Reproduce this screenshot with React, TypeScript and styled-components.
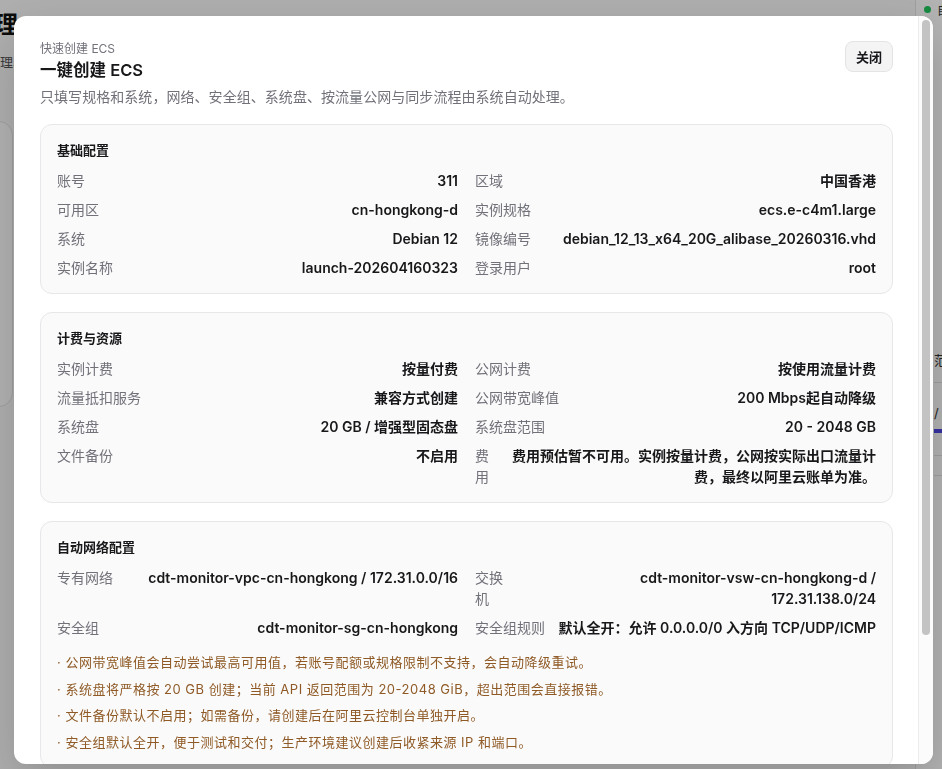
import React from "react";
import styled, { createGlobalStyle } from "styled-components";

const GlobalStyle = createGlobalStyle`
  html, body {
    margin: 0;
    padding: 0;
    height: 100%;
    overflow: hidden;
  }
  body {
    font-family: Inter, "Noto Sans CJK SC", "Noto Sans", sans-serif;
    color: #18181b;
    -webkit-font-smoothing: antialiased;
  }
  * { box-sizing: border-box; }
`;

/* ---------- background page ---------- */

const Page = styled.div`
  display: grid;
  grid-template-columns: 915px 1fr;
  width: 100vw;
  height: 100vh;
  background: #fafafa;
  overflow: hidden;
`;

const Main = styled.main`
  overflow: hidden;
  padding-top: 12px;
`;

const MainInner = styled.div`
  margin-left: -78px;
  width: 900px;
`;

const PageTitle = styled.h1`
  margin: 0;
  font-size: 24px;
  line-height: 26px;
  font-weight: 700;
  color: #111;
`;

const PageSub = styled.p`
  margin: 15px 0 0;
  font-size: 13px;
  line-height: 18px;
  color: #555;
`;

const PageCard = styled.section`
  margin-top: 50px;
  width: 91px;
  height: 286px;
  background: #fff;
  border: 1px solid #e4e4e7;
  border-radius: 14px;
`;

const Side = styled.aside`
  border-left: 1px solid #e4e4e7;
  background: #fff;
  padding-left: 8px;
  overflow: hidden;
  white-space: nowrap;
`;

const Status = styled.div`
  display: flex;
  align-items: center;
  gap: 6px;
  height: 18px;
  font-size: 12px;
  color: #333;
`;

const Dot = styled.span`
  flex: none;
  width: 7px;
  height: 7px;
  border-radius: 50%;
  background: #22c55e;
`;

const SideList = styled.div`
  margin-top: 332px;
  margin-left: 10px;
  font-size: 13px;
  color: #333;
`;

const SideItem = styled.div`
  padding: 0 0 12px;
  border-bottom: 1px solid #e4e4e7;
  line-height: 20px;
`;

const SideProgress = styled.div`
  padding-top: 20px;
  border-bottom: 1px solid #e4e4e7;
  padding-bottom: 22px;
  line-height: 20px;
`;

const Bar = styled.div`
  margin-top: 6px;
  height: 4px;
  background: #4f46e5;
`;

const SideEmpty = styled.div`
  height: 20px;
  border-bottom: 1px solid #e4e4e7;
`;

/* ---------- modal ---------- */

const Overlay = styled.div`
  position: fixed;
  inset: 0;
  background: rgba(0, 0, 0, 0.3);
  display: flex;
  justify-content: flex-start;
  align-items: flex-start;
  padding: 16px 0 0 14px;
`;

const Dialog = styled.div`
  display: flex;
  width: 919px;
  height: 748px;
  background: #fff;
  border-radius: 12px;
  box-shadow: 0 18px 48px rgba(0, 0, 0, 0.18);
  overflow: hidden;
`;

const ScrollArea = styled.div`
  flex: 1;
  min-width: 0;
  overflow-y: auto;
  padding: 25px 25px 25px 26px;
  scrollbar-width: none;
  &::-webkit-scrollbar {
    display: none;
  }
`;

const ScrollTrack = styled.div`
  flex: none;
  width: 15px;
  padding: 4px 3px;
  background: #fbfbfb;
  border-left: 1px solid #ececec;
  display: flex;
  flex-direction: column;
`;

const ScrollThumb = styled.div`
  height: 615px;
  border-radius: 5px;
  background: #c3c3c3;
`;

const Header = styled.header`
  display: flex;
  justify-content: space-between;
  align-items: flex-start;
`;

const HeadText = styled.div`
  display: flex;
  flex-direction: column;
`;

const Eyebrow = styled.div`
  font-size: 12px;
  line-height: 16px;
  color: #71717a;
`;

const Title = styled.h2`
  margin: 1px 0 0;
  font-size: 16.5px;
  line-height: 24px;
  font-weight: 600;
  color: #18181b;
`;

const Desc = styled.p`
  margin: 5px 0 0;
  font-size: 14px;
  line-height: 20px;
  color: #71717a;
  letter-spacing: 0.05px;
`;

const CloseButton = styled.button`
  height: 31px;
  padding: 0 10px;
  border: 1px solid #e4e4e7;
  border-radius: 8px;
  background: #f4f4f5;
  font-family: inherit;
  font-size: 13px;
  font-weight: 600;
  color: #18181b;
  cursor: pointer;
`;

const Sections = styled.div`
  display: flex;
  flex-direction: column;
  gap: 18px;
  margin-top: 17px;
`;

const Card = styled.section`
  border: 1px solid #e7e7ea;
  border-radius: 12px;
  background: #fafafa;
  padding: 15px 16px;
`;

const CardTitle = styled.h3`
  margin: 0 0 10px;
  font-size: 13px;
  line-height: 20px;
  font-weight: 600;
  color: #18181b;
`;

const Grid = styled.div`
  display: grid;
  grid-template-columns: 1fr 1fr;
  column-gap: 17px;
  row-gap: 8px;
  align-items: start;
`;

const Row = styled.div`
  display: flex;
  justify-content: space-between;
  align-items: flex-start;
  gap: 12px;
  font-size: 14px;
  line-height: 21px;
`;

const Label = styled.span<{ $maxWidth?: string }>`
  color: #71717a;
  ${(p) => (p.$maxWidth ? `max-width: ${p.$maxWidth};` : "")}
`;

const Value = styled.span`
  font-weight: 600;
  color: #18181b;
  text-align: right;
`;

const Notes = styled.ul`
  list-style: none;
  margin: 14px 0 0;
  padding: 0;
  display: flex;
  flex-direction: column;
  gap: 6.5px;
`;

const Note = styled.li`
  font-size: 13px;
  line-height: 20px;
  color: #8f5a26;
  letter-spacing: 0.5px;
`;

const Footer = styled.footer`
  margin-top: 24px;
  padding: 16px 0;
  border-top: 1px solid #ededf0;
  display: flex;
  flex-direction: column;
  gap: 12px;
`;

const FooterHint = styled.span`
  font-size: 13px;
  line-height: 20px;
  color: #71717a;
`;

const Actions = styled.div`
  display: flex;
  justify-content: flex-end;
  gap: 10px;
`;

const ActionButton = styled.button<{ $primary?: boolean }>`
  height: 36px;
  padding: 0 16px;
  border-radius: 8px;
  border: 1px solid ${(p) => (p.$primary ? "#18181b" : "#e4e4e7")};
  background: ${(p) => (p.$primary ? "#18181b" : "#f4f4f5")};
  color: ${(p) => (p.$primary ? "#fff" : "#18181b")};
  font-family: inherit;
  font-size: 13px;
  font-weight: 600;
`;

type Item = { label: string; value: string[]; labelWidth?: string };

const p = (label: string, value: string | string[], labelWidth?: string): Item => ({
  label,
  value: Array.isArray(value) ? value : [value],
  labelWidth,
});

const basic: Item[] = [
  p("账号", "311"),
  p("区域", "中国香港"),
  p("可用区", "cn-hongkong-d"),
  p("实例规格", "ecs.e-c4m1.large"),
  p("系统", "Debian 12"),
  p("镜像编号", "debian_12_13_x64_20G_alibase_20260316.vhd"),
  p("实例名称", "launch-202604160323"),
  p("登录用户", "root"),
];

const billing: Item[] = [
  p("实例计费", "按量付费"),
  p("公网计费", "按使用流量计费"),
  p("流量抵扣服务", "兼容方式创建"),
  p("公网带宽峰值", "200 Mbps起自动降级"),
  p("系统盘", "20 GB / 增强型固态盘"),
  p("系统盘范围", "20 - 2048 GB"),
  p("文件备份", "不启用"),
  p("费用", "费用预估暂不可用。实例按量计费，公网按实际出口流量计费，最终以阿里云账单为准。"),
];

const network: Item[] = [
  p("专有网络", "cdt-monitor-vpc-cn-hongkong / 172.31.0.0/16"),
  p("交换机", ["cdt-monitor-vsw-cn-hongkong-d /", "172.31.138.0/24"], "2em"),
  p("安全组", "cdt-monitor-sg-cn-hongkong"),
  p("安全组规则", "默认全开：允许 0.0.0.0/0 入方向 TCP/UDP/ICMP"),
];

const notes = [
  "公网带宽峰值会自动尝试最高可用值，若账号配额或规格限制不支持，会自动降级重试。",
  "系统盘将严格按 20 GB 创建；当前 API 返回范围为 20-2048 GiB，超出范围会直接报错。",
  "文件备份默认不启用；如需备份，请创建后在阿里云控制台单独开启。",
  "安全组默认全开，便于测试和交付；生产环境建议创建后收紧来源 IP 和端口。",
];

const Pairs: React.FC<{ items: Item[] }> = ({ items }) => (
  <Grid>
    {items.map((it) => (
      <Row key={it.label}>
        <Label $maxWidth={it.labelWidth}>{it.label}</Label>
        <Value>
          {it.value.map((line, i) => (
            <React.Fragment key={i}>
              {i > 0 && <br />}
              {line}
            </React.Fragment>
          ))}
        </Value>
      </Row>
    ))}
  </Grid>
);

export default function App() {
  return (
    <>
      <GlobalStyle />
      <Page>
        <Main>
          <MainInner>
            <PageTitle>资源管理</PageTitle>
            <PageSub>资源与实例管理、按需创建与同步账号下的云服务器。</PageSub>
            <PageCard />
          </MainInner>
        </Main>
        <Side>
          <Status>
            <Dot />
            自动同步中
          </Status>
          <SideList>
            <SideItem>范围</SideItem>
            <SideProgress>
              / 流量
              <Bar />
            </SideProgress>
            <SideEmpty />
          </SideList>
        </Side>
      </Page>
      <Overlay>
        <Dialog role="dialog" aria-modal="true">
          <ScrollArea>
            <Header>
              <HeadText>
                <Eyebrow>快速创建 ECS</Eyebrow>
                <Title>一键创建 ECS</Title>
                <Desc>只填写规格和系统，网络、安全组、系统盘、按流量公网与同步流程由系统自动处理。</Desc>
              </HeadText>
              <CloseButton>关闭</CloseButton>
            </Header>
            <Sections>
              <Card>
                <CardTitle>基础配置</CardTitle>
                <Pairs items={basic} />
              </Card>
              <Card>
                <CardTitle>计费与资源</CardTitle>
                <Pairs items={billing} />
              </Card>
              <Card>
                <CardTitle>自动网络配置</CardTitle>
                <Pairs items={network} />
                <Notes>
                  {notes.map((n) => (
                    <Note key={n}>· {n}</Note>
                  ))}
                </Notes>
              </Card>
            </Sections>
            <Footer>
              <FooterHint>创建完成后将自动同步到账号 311 的资源列表。</FooterHint>
              <Actions>
                <ActionButton>取消</ActionButton>
                <ActionButton $primary>立即创建</ActionButton>
              </Actions>
            </Footer>
          </ScrollArea>
          <ScrollTrack aria-hidden="true">
            <ScrollThumb />
          </ScrollTrack>
        </Dialog>
      </Overlay>
    </>
  );
}
